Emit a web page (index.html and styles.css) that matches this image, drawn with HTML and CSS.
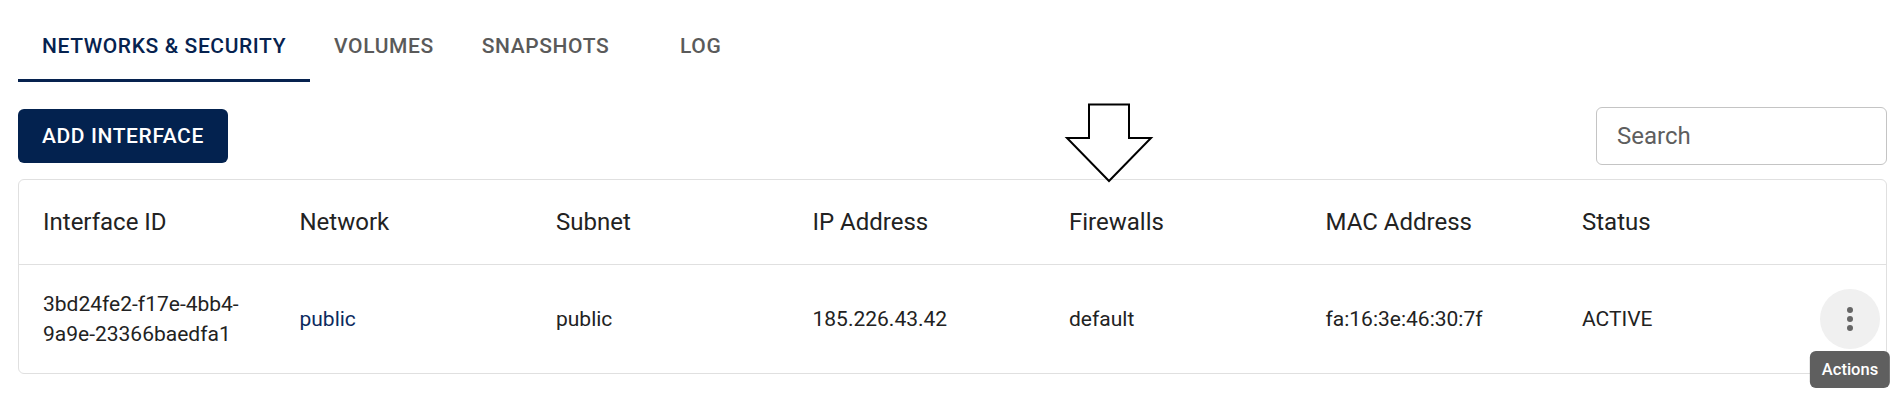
FILE: index.html
```html
<!DOCTYPE html>
<html lang="en">
<head>
<meta charset="utf-8">
<title>Networks &amp; Security</title>
<link rel="stylesheet" href="styles.css">
</head>
<body>
<div class="page">
  <nav class="tabs">
    <a class="tab active">NETWORKS &amp; SECURITY</a>
    <a class="tab">VOLUMES</a>
    <a class="tab">SNAPSHOTS</a>
    <a class="tab tab-min">LOG</a>
  </nav>

  <div class="toolbar">
    <button class="btn-primary">ADD INTERFACE</button>
    <div class="search"><input type="text" placeholder="Search"></div>
  </div>

  <svg class="annot-arrow" width="90" height="84" viewBox="0 0 90 84">
    <polygon points="25,2.5 65,2.5 65,36 87,36 45,79 3,36 25,36" fill="#fff" stroke="#000" stroke-width="2" stroke-linejoin="miter"/>
  </svg>

  <div class="card">
    <div class="row head">
      <div class="cell">Interface ID</div>
      <div class="cell">Network</div>
      <div class="cell">Subnet</div>
      <div class="cell">IP Address</div>
      <div class="cell">Firewalls</div>
      <div class="cell">MAC Address</div>
      <div class="cell">Status</div>
      <div class="cell"></div>
    </div>
    <div class="row body">
      <div class="cell">3bd24fe2-f17e-4bb4-9a9e-23366baedfa1</div>
      <div class="cell"><a class="link">public</a></div>
      <div class="cell">public</div>
      <div class="cell">185.226.43.42</div>
      <div class="cell">default</div>
      <div class="cell">fa:16:3e:46:30:7f</div>
      <div class="cell">ACTIVE</div>
      <div class="cell actions">
        <button class="icon-btn" aria-label="Actions">
          <svg width="36" height="36" viewBox="0 0 24 24"><circle cx="12" cy="6" r="2" fill="#666"/><circle cx="12" cy="12" r="2" fill="#666"/><circle cx="12" cy="18" r="2" fill="#666"/></svg>
          <span class="tooltip">Actions</span>
        </button>
      </div>
    </div>
  </div>
</div>
</body>
</html>
```
FILE: styles.css
```css
* { box-sizing: border-box; }
html, body { margin: 0; padding: 0; background: #fff; }
body {
  font-family: Roboto, "Liberation Sans", Arial, sans-serif;
  color: #222;
  min-height: 400px;
}
.page {
  position: relative;
  padding: 10px 17px 28px 18px;
}
.tabs {
  display: flex;
  height: 72px;
}
.tab {
  display: flex;
  align-items: center;
  justify-content: center;
  padding: 0 24px;
  height: 72px;
  font-size: 21px;
  font-weight: 500;
  letter-spacing: 0.6px;
  color: #5a5a5a;
  border-bottom: 3px solid transparent;
  padding-top: 3px;
  white-space: nowrap;
}
.tab.active {
  color: #06224f;
  border-bottom-color: #06224f;
}
.tab-min { min-width: 135px; }
.toolbar {
  display: flex;
  justify-content: space-between;
  align-items: center;
  margin-top: 25px;
  height: 58px;
}
.btn-primary {
  height: 54px;
  padding: 0 24px;
  background: #03224f;
  color: #fff;
  border: none;
  border-radius: 6px;
  font-family: inherit;
  font-size: 21px;
  font-weight: 500;
  letter-spacing: 0.6px;
}
.search { width: 291px; }
.search input {
  width: 100%;
  height: 58px;
  border: 1px solid #c4c4c4;
  border-radius: 6px;
  padding: 0 20px;
  font-family: inherit;
  font-size: 24px;
  color: #222;
  outline: none;
}
.search input::placeholder { color: #5e5e5e; opacity: 1; }
.annot-arrow {
  position: absolute;
  left: 1064px;
  top: 102px;
}
.card {
  margin-top: 14px;
  border: 1px solid #e0e0e0;
  border-radius: 6px;
}
.row {
  display: grid;
  grid-template-columns: repeat(7, 256.5px) 1fr;
}
.row.head {
  border-bottom: 1px solid #e0e0e0;
}
.cell {
  padding: 24px;
  display: flex;
  align-items: center;
}
.head .cell {
  font-size: 24px;
  line-height: 36px;
  color: #222;
}
.body .cell {
  font-size: 21px;
  line-height: 30px;
  color: #222;
}
.link { color: #0b2a5e; }
.cell.actions {
  padding: 0 6px 0 0;
  justify-content: flex-end;
}
.icon-btn {
  position: relative;
  width: 60px;
  height: 60px;
  border-radius: 50%;
  border: none;
  background: #f0f0f0;
  display: flex;
  align-items: center;
  justify-content: center;
  padding: 0;
}
.icon-btn svg { display: block; }
.tooltip {
  position: absolute;
  top: 62px;
  left: 50%;
  transform: translateX(-50%);
  background: #5f5f5f;
  color: #fff;
  font-family: Roboto, "Liberation Sans", Arial, sans-serif;
  font-size: 16.5px;
  font-weight: 500;
  line-height: 25px;
  padding: 6px 12px;
  border-radius: 6px;
  white-space: nowrap;
}
```
